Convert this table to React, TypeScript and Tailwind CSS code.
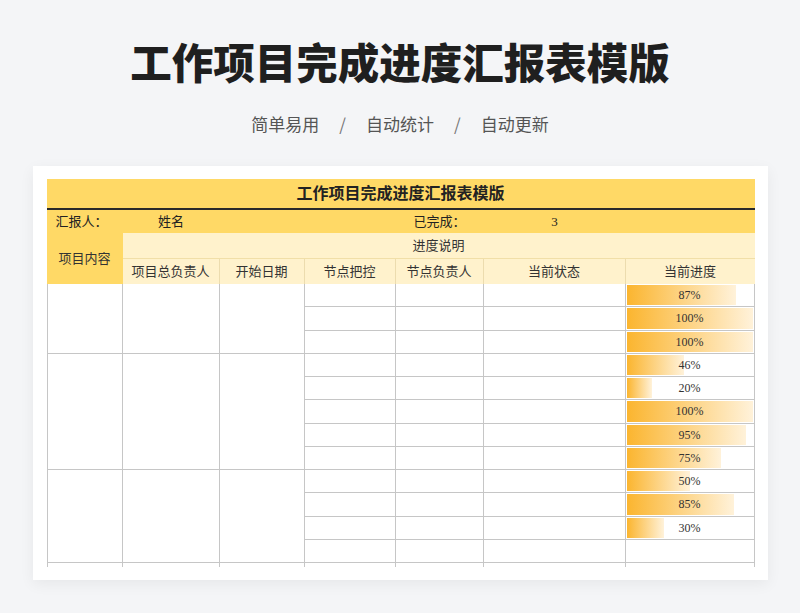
import type { ReactNode } from 'react'

const cols = [76, 97, 85, 91, 88, 142, 129]
const heads = ['项目总负责人', '开始日期', '节点把控', '节点负责人', '当前状态', '当前进度']
const groups = [3, 5, 4, 1]
const progress: (number | null)[] = [87, 100, 100, 46, 20, 100, 95, 75, 50, 85, 30, null, null]
const ROW = 23.25

function Cell({ w, h, children, className = '' }: { w: number; h: number; children?: ReactNode; className?: string }) {
  return (
    <div
      className={`flex shrink-0 items-center justify-center border-r border-b border-[#c6c6c6] bg-white ${className}`}
      style={{ width: w, height: h }}
    >
      {children}
    </div>
  )
}

function Bar({ pct }: { pct: number | null }) {
  return (
    <div className="relative flex h-full w-full items-center justify-center">
      {pct !== null && (
        <div
          className="absolute top-px bottom-px left-px bg-[linear-gradient(to_right,#fbb52f,#fff2da)]"
          style={{ width: `calc((100% - 2px) * ${pct / 100})` }}
        />
      )}
      {pct !== null && <span className="relative text-[12px] text-[#333]">{pct}%</span>}
    </div>
  )
}

function Table() {
  return (
    <div className="h-[388px] w-[708px] overflow-hidden font-['Liberation_Serif','Noto_Sans_CJK_SC',serif] text-[#222]">
      <div className="flex h-[31px] items-center justify-center border-b-2 border-[#2a2a2a] bg-[#ffd966] text-[16px] font-semibold">
        工作项目完成进度汇报表模版
      </div>
      <div className="flex h-[23px] items-center bg-[#ffd966] text-[13px]">
        <div className="w-[76px] pl-[9px]">汇报人：</div>
        <div className="w-[97px] text-center">姓名</div>
        <div className="w-[176px]" />
        <div className="w-[88px] text-center">已完成：</div>
        <div className="w-[142px] text-center">3</div>
      </div>
      <div className="flex h-[51px] text-[13px] text-[#333]">
        <div className="flex w-[76px] items-center justify-center bg-[#ffd966]">项目内容</div>
        <div className="flex flex-1 flex-col bg-[#fff2cc]">
          <div className="flex h-[26px] items-center justify-center border-b border-[#f1dfa8]">进度说明</div>
          <div className="flex h-[25px]">
            {heads.map((h, i) => (
              <div
                key={h}
                className="flex items-center justify-center border-r border-[#ecdcae] last:border-r-0"
                style={{ width: cols[i + 1] }}
              >
                {h}
              </div>
            ))}
          </div>
        </div>
      </div>
      <div className="flex border-l border-[#c6c6c6]">
        <div className="flex flex-col">
          {groups.map((n, g) => (
            <div key={g} className="flex">
              <Cell w={cols[0] - 1} h={n * ROW} />
              <Cell w={cols[1]} h={n * ROW} />
              <Cell w={cols[2]} h={n * ROW} />
            </div>
          ))}
        </div>
        <div className="flex flex-col">
          {progress.map((p, r) => (
            <div key={r} className="flex">
              <Cell w={cols[3]} h={ROW} />
              <Cell w={cols[4]} h={ROW} />
              <Cell w={cols[5]} h={ROW} />
              <Cell w={cols[6]} h={ROW}>
                <Bar pct={p} />
              </Cell>
            </div>
          ))}
        </div>
      </div>
    </div>
  )
}

export default function App() {
  return (
    <div className="flex h-[613px] w-[800px] flex-col items-center bg-[#f4f5f7] pt-[40px] font-['Noto_Sans_CJK_SC',sans-serif]">
      <h1 className="text-[41.5px] leading-[42px] font-black text-[#1f1f1f]">工作项目完成进度汇报表模版</h1>
      <div className="mt-[30px] flex h-[24px] items-center gap-[20px] text-[17px] text-[#555]">
        <span>简单易用</span>
        <span className="text-[#777]">/</span>
        <span>自动统计</span>
        <span className="text-[#777]">/</span>
        <span>自动更新</span>
      </div>
      <div className="mt-[30px] h-[414px] w-[735px] bg-white pt-[13px] pr-[13px] pl-[14px] shadow-[0_4px_14px_rgba(0,0,0,0.06)]">
        <Table />
      </div>
    </div>
  )
}
